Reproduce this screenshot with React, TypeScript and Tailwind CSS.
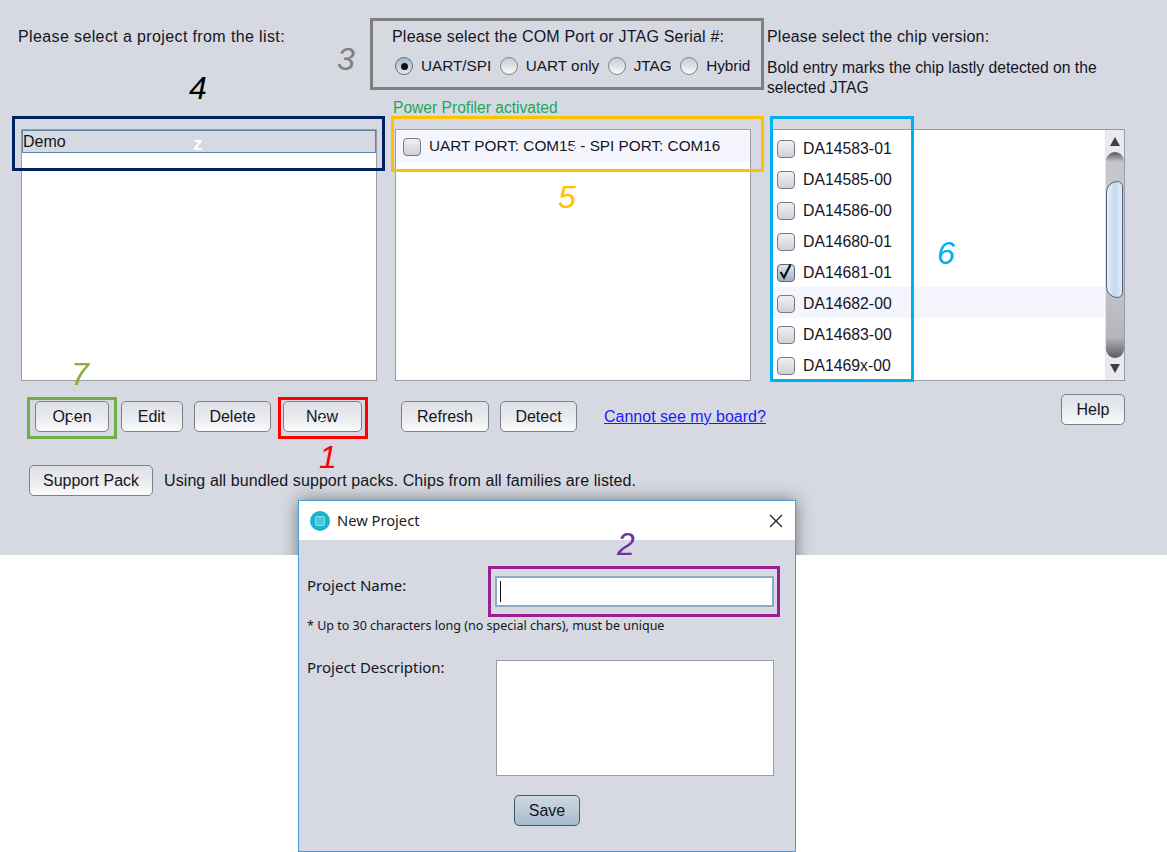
import React from 'react';

const font = "font-['Liberation_Sans',Arial,sans-serif]";
const btnBase = 'flex shrink-0 items-center justify-center rounded-[5px] border-[1.5px] bg-linear-to-b pt-px text-[16px] text-[#15151f]';
const btn = `${btnBase} border-[#7c7f87] from-[#dfe1e7] via-[#e8eaee] to-[#fbfbfc]`;

const chips = ['DA14583-01', 'DA14585-00', 'DA14586-00', 'DA14680-01', 'DA14681-01', 'DA14682-00', 'DA14683-00', 'DA1469x-00'];

const Checkbox = ({ checked = false }: { checked?: boolean }) => (
  <div
    className={`relative h-[18px] w-[18px] shrink-0 rounded-[4px] border-[1.5px] ${
      checked ? 'border-[#5c6670] bg-linear-to-b from-[#dfe6ed] to-[#9db3c8]' : 'border-[#777a82] bg-linear-to-b from-[#f0f1f4] to-[#cfd1d7]'
    }`}
  >
    {checked && (
      <svg viewBox="0 0 16 16" className="absolute left-0 top-[-1px] h-[16px] w-[16px]">
        <path d="M2.5 8 L6 13.5 L12.5 0.5" fill="none" stroke="#111" strokeWidth="2.2" />
      </svg>
    )}
  </div>
);

const Radio = ({ label, checked = false }: { label: string; checked?: boolean }) => (
  <div className="flex items-center gap-[8px]">
    <div
      className={`flex h-[18px] w-[18px] items-center justify-center rounded-full border-[1.5px] ${
        checked ? 'border-[#5f6f80] bg-linear-to-b from-[#a5b8ca] to-[#e4e9ee]' : 'border-[#7f828a] bg-linear-to-b from-[#c8cad0] to-[#fafafa]'
      }`}
    >
      {checked && <div className="h-[7px] w-[7px] rounded-full bg-[#101016]" />}
    </div>
    <span>{label}</span>
  </div>
);

const Scrollbar = () => (
  <div className="flex w-[19px] shrink-0 flex-col border-l border-[#e4e5ea] bg-[#e9eaee]">
    <div className="flex h-[22px] items-center justify-center">
      <div className="h-0 w-0 border-x-[5px] border-b-[9px] border-x-transparent border-b-[#3c3f46]" />
    </div>
    <div className="flex h-[206px] flex-col rounded-[10px] bg-[linear-gradient(to_bottom,#55575c_0px,#c4c6cb_10px,#c9cbd0_50%,#b4b6bb_90%,#5a5c62_100%)] pt-[29px]">
      <div className="h-[117px] w-[17px] rounded-l-[12px] rounded-r-[6px] border-[1.5px] border-[#4d6278] bg-linear-to-r from-[#eaf1f8] via-[#c3d9ec] to-[#e3ecf5]" />
    </div>
    <div className="flex h-[21px] items-center justify-center">
      <div className="h-0 w-0 border-x-[5px] border-t-[9px] border-x-transparent border-t-[#3c3f46]" />
    </div>
  </div>
);

// numbered callouts and coloured frames drawn over the screenshot
const Callouts = () => (
  <>
    <div className="absolute left-[12px] top-[116px] h-[55px] w-[373px] border-[3px] border-[#002060]" />
    <div className="absolute left-[370px] top-[18px] h-[72px] w-[394px] border-[3px] border-[#7f7f7f]" />
    <div className="absolute left-[391px] top-[116px] h-[56px] w-[373px] border-[3px] border-[#ffc000]" />
    <div className="absolute left-[770px] top-[116px] h-[266px] w-[144px] border-[3px] border-[#00b0f0]" />
    <div className="absolute left-[27px] top-[397px] h-[42px] w-[90px] border-[3px] border-[#70ad47]" />
    <div className="absolute left-[278px] top-[397px] h-[42px] w-[90px] border-[3px] border-[#ff0000]" />
    <div className="absolute left-[488px] top-[566px] h-[51px] w-[292px] border-[3px] border-[#9a1f8f]" />

    <span className="absolute left-[337px] top-[41px] text-[32px] italic leading-[37px] text-[#7f7f7f]">3</span>
    <span className="absolute left-[189px] top-[70px] text-[32px] italic leading-[37px] text-black">4</span>
    <span className="absolute left-[558px] top-[179px] text-[32px] italic leading-[37px] text-[#ffc000]">5</span>
    <span className="absolute left-[937px] top-[235px] text-[32px] italic leading-[37px] text-[#00b0f0]">6</span>
    <span className="absolute left-[71px] top-[356px] text-[32px] italic leading-[37px] text-[#8cad2c]">7</span>
    <span className="absolute left-[319px] top-[439px] text-[32px] italic leading-[37px] text-[#ff0000]">1</span>
    <span className="absolute left-[617px] top-[526px] text-[32px] italic leading-[37px] text-[#7030a0]">2</span>

    <span className="absolute left-[193px] top-[133px] text-[19px] font-bold leading-[22px] text-white">z</span>
    <span className="absolute left-[69px] top-[411px] text-[11px] font-bold leading-[12px] text-white">z</span>
    <span className="absolute left-[319px] top-[411px] text-[11px] font-bold leading-[12px] text-white">z</span>
    <span className="absolute left-[572px] top-[140px] text-[11px] font-bold leading-[12px] text-white">z</span>
  </>
);

const NewProjectDialog = () => (
  <div className="absolute left-[298px] top-[500px] flex h-[352px] w-[498px] flex-col border border-[#4a9ad8] bg-[#d6d9e1] text-[#15151f]">
    <div className="flex h-[39px] shrink-0 items-center bg-white pl-[11px] pr-[12px]">
      <div className="flex h-[20px] w-[20px] items-center justify-center rounded-full bg-[#19b3cf]">
        <div className="h-[10px] w-[10px] rounded-[2px] border border-[#8adfec] bg-[#4cc6da]" />
      </div>
      <span className="ml-[7px] font-['Noto_Sans',sans-serif] text-[14.7px] text-[#1c1c24]">New Project</span>
      <svg viewBox="0 0 14 14" className="ml-auto h-[14px] w-[14px]">
        <path d="M1 1 L13 13 M13 1 L1 13" stroke="#222" strokeWidth="1.3" />
      </svg>
    </div>
    <div className="flex flex-1 flex-col pl-[8px] pt-[36px] font-['Noto_Sans',sans-serif]">
      <div className="flex items-start">
        <span className="w-[188px] text-[15px] leading-[18px]">Project Name:</span>
        <div className="flex h-[31px] w-[279px] items-center border-2 border-[#8fa9c6] bg-white pl-[3px]">
          <div className="h-[21px] w-px bg-[#111]" />
        </div>
      </div>
      <span className="mt-[11px] text-[12.5px] leading-[16px]">* Up to 30 characters long (no special chars), must be unique</span>
      <div className="mt-[26px] flex items-start">
        <span className="mt-[-2px] w-[189px] text-[15px] leading-[18px]">Project Description:</span>
        <div className="h-[116px] w-[278px] border-[1.5px] border-[#9a9da5] bg-white" />
      </div>
      <div className={`${btnBase} ml-[207px] mt-[19px] h-[31px] w-[66px] border-[#47586b] from-[#cdd9e4] via-[#bccbd9] to-[#a4bacd] font-['Liberation_Sans',sans-serif]`}>Save</div>
    </div>
  </div>
);

export default function App() {
  return (
    <div className={`relative h-[852px] w-[1167px] overflow-hidden bg-white ${font}`}>
      <div className="relative h-[555px] overflow-hidden bg-[#d6d9e1] text-[16px] text-[#15151f]">
        {/* window shadow of the dialog falls on the panel only */}
        <div className="absolute left-[298px] top-[500px] h-[352px] w-[498px] shadow-[0_0_16px_rgba(0,0,0,0.45)]" />
        <div className="relative flex pl-[21px]">
          {/* projects */}
          <div className="flex w-[356px] flex-col">
            <div className="h-[129px] pt-[28px]">
              <p className="ml-[-3px] leading-[18px] tracking-[0.38px]">Please select a project from the list:</p>
            </div>
            <div className="h-[252px] border-[1.5px] border-[#9a9da5] bg-white">
              <div className="flex h-[23px] items-center border-[1.5px] border-[#5b86a8] bg-[#d6d9e1] pt-px">Demo</div>
            </div>
            <div className="ml-[14px] mt-[20px] flex gap-[11.5px]">
              <div className={`${btn} h-[31px] w-[74px]`}>Open</div>
              <div className={`${btn} h-[31px] w-[62px]`}>Edit</div>
              <div className={`${btn} h-[31px] w-[77px]`}>Delete</div>
              <div className={`${btn} h-[31px] w-[79px]`}>New</div>
            </div>
          </div>

          {/* ports */}
          <div className="ml-[18px] flex w-[356px] flex-col">
            <div className="flex h-[129px] flex-col pt-[28px]">
              <p className="ml-[-3px] whitespace-nowrap leading-[18px] tracking-[0.2px]">Please select the COM Port or JTAG Serial #:</p>
              <div className="mt-[9px] flex gap-[8.5px] whitespace-nowrap text-[15.3px] leading-[22px]">
                <Radio label="UART/SPI" checked />
                <Radio label="UART only" />
                <Radio label="JTAG" />
                <Radio label="Hybrid" />
              </div>
              <p className="ml-[-2px] mt-[22px] text-[15.6px] leading-[18px] text-[#1fa856]">Power Profiler activated</p>
            </div>
            <div className="h-[252px] border-[1.5px] border-[#9a9da5] bg-white pt-[1px]">
              <div className="flex h-[31px] items-center gap-[8px] bg-[#f4f5fd] pl-[7px] text-[15.3px]">
                <Checkbox />
                <span>UART PORT: COM15 - SPI PORT: COM16</span>
              </div>
            </div>
            <div className="ml-[6px] mt-[20px] flex items-center">
              <div className={`${btn} h-[31px] w-[88px]`}>Refresh</div>
              <div className={`${btn} ml-[11px] h-[31px] w-[77px]`}>Detect</div>
              <a className="ml-[27px] whitespace-nowrap pt-px text-[#1a1aff] underline">Cannot see my board?</a>
            </div>
          </div>

          {/* chips */}
          <div className="ml-[20px] flex w-[354px] flex-col">
            <div className="h-[129px] pt-[28px]">
              <p className="ml-[-4px] leading-[18px] tracking-[0.2px]">Please select the chip version:</p>
              <p className="ml-[-4px] mt-[12px] w-[350px] text-[15.7px] leading-[20px]">Bold entry marks the chip lastly detected on the selected JTAG</p>
            </div>
            <div className="flex h-[252px] border-[1.5px] border-[#9a9da5] bg-white">
              <div className="flex-1 pt-[2px]">
                {chips.map((c, i) => (
                  <div key={c} className={`flex h-[31px] items-center gap-[8px] pl-[5px] pt-[2px] text-[15.8px] ${i === 5 ? 'bg-[#f4f5fd]' : ''}`}>
                    <Checkbox checked={i === 4} />
                    <span>{c}</span>
                  </div>
                ))}
              </div>
              <Scrollbar />
            </div>
            <div className="mt-[13px] flex justify-end">
              <div className={`${btn} h-[31px] w-[64px]`}>Help</div>
            </div>
          </div>
        </div>

        <div className="relative ml-[29px] mt-[33px] flex items-center">
          <div className={`${btn} h-[31px] w-[124px]`}>Support Pack</div>
          <span className="ml-[11px] pt-px tracking-[0.09px]">Using all bundled support packs. Chips from all families are listed.</span>
        </div>
      </div>

      <NewProjectDialog />
      <Callouts />
    </div>
  );
}
